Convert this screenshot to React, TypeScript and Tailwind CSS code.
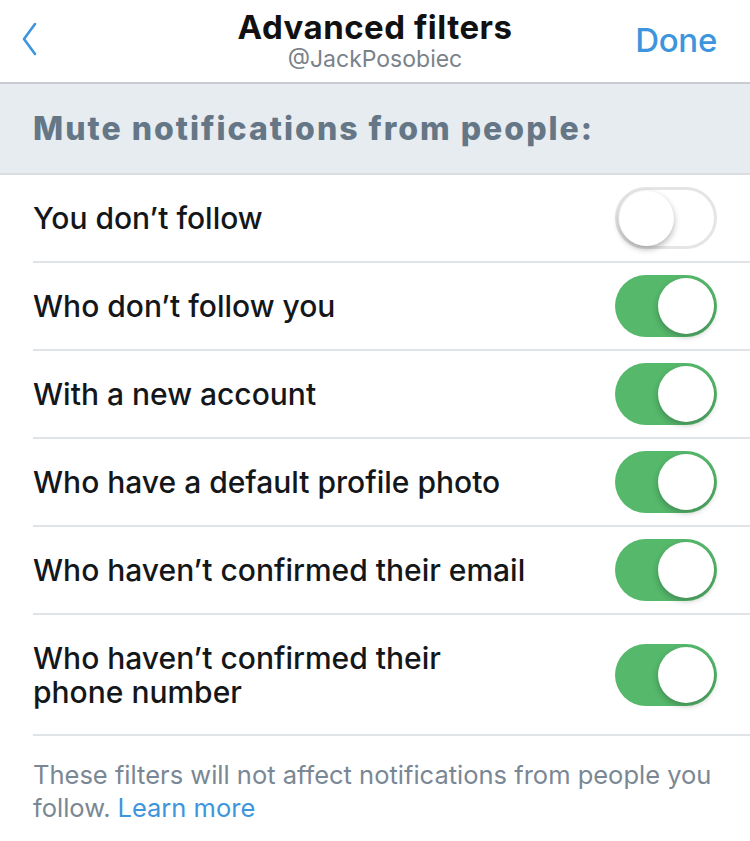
import React, { useState } from 'react';

const rows = [
  { label: "You don’t follow", on: false },
  { label: "Who don’t follow you", on: true },
  { label: "With a new account", on: true },
  { label: "Who have a default profile photo", on: true },
  { label: "Who haven’t confirmed their email", on: true },
  { label: "Who haven’t confirmed their phone number", on: true, tall: true },
];

const Toggle = ({ on, onClick }: { on: boolean; onClick: () => void }) => (
  <button
    onClick={onClick}
    className={
      on
        ? "relative w-[102px] h-[62px] rounded-full bg-[#55b86b] shrink-0"
        : "relative w-[102px] h-[62px] rounded-full bg-white border-[3px] border-[#e5e5e5] shrink-0"
    }
  >
    <span
      className={
        on
          ? "absolute top-[3px] right-[3px] w-[56px] h-[56px] rounded-full bg-white shadow-[0_3px_6px_rgba(0,0,0,0.25)]"
          : "absolute top-[1px] left-[1px] w-[55px] h-[55px] rounded-full bg-white shadow-[0_3px_6px_rgba(0,0,0,0.3)]"
      }
    />
  </button>
);

export default function App() {
  const [state, setState] = useState(rows.map((r) => r.on));

  return (
    <div className="w-[750px] h-[841px] bg-white font-['Inter',sans-serif] overflow-hidden">
      {/* Header */}
      <div className="h-[84px] flex items-center px-[20px] border-b-2 border-[#c8ccd0]">
        <div className="w-[140px] flex items-center">
          <svg width="16" height="34" viewBox="0 0 16 34" className="ml-[2px] -mt-[4px]">
            <path d="M13 2 L2 17 L13 32" fill="none" stroke="#3d95dd" strokeWidth="2.6" strokeLinecap="round" strokeLinejoin="round" />
          </svg>
        </div>
        <div className="flex-1 flex flex-col items-center -mt-[3px]">
          <div className="text-[33px] leading-[38px] font-bold tracking-[0.5px] text-[#111]">Advanced filters</div>
          <div className="text-[23px] leading-[26px] text-[#7a828a]">@JackPosobiec</div>
        </div>
        <div className="w-[140px] flex justify-end">
          <button className="text-[33px] font-medium text-[#3d95dd] mr-[13px] tracking-[-0.3px]">Done</button>
        </div>
      </div>

      {/* Section header */}
      <div className="h-[91px] bg-[#e6ecf0] flex items-center px-[33px] border-b-2 border-[#d8dde1]">
        <span className="text-[32px] font-extrabold text-[#657786] tracking-[2px]">Mute notifications from people:</span>
      </div>

      {/* Rows */}
      <div className="pl-[33px]">
        {rows.map((r, i) => (
          <div
            key={r.label}
            className={
              r.tall
                ? "h-[121px] flex items-center justify-between pr-[33px] border-b-2 border-[#e1e4e7]"
                : "h-[88px] flex items-center justify-between pr-[33px] border-b-2 border-[#e1e4e7]"
            }
          >
            <span
              className={
                r.tall
                  ? "text-[30px] leading-[34px] font-medium text-[#14171a] max-w-[460px]"
                  : "text-[30px] leading-[34px] font-medium text-[#14171a] whitespace-nowrap"
              }
            >
              {r.label}
            </span>
            <Toggle
              on={state[i]}
              onClick={() => setState(state.map((v, j) => (j === i ? !v : v)))}
            />
          </div>
        ))}
      </div>

      {/* Footer */}
      <div className="px-[33px] pt-[22px] text-[25.5px] leading-[33px] text-[#7a8794]">
        <div>These filters will not affect notifications from people you</div>
        <div className="flex gap-[7px]">
          <span>follow.</span>
          <a href="#" className="text-[#3d95dd]">Learn more</a>
        </div>
      </div>
    </div>
  );
}
